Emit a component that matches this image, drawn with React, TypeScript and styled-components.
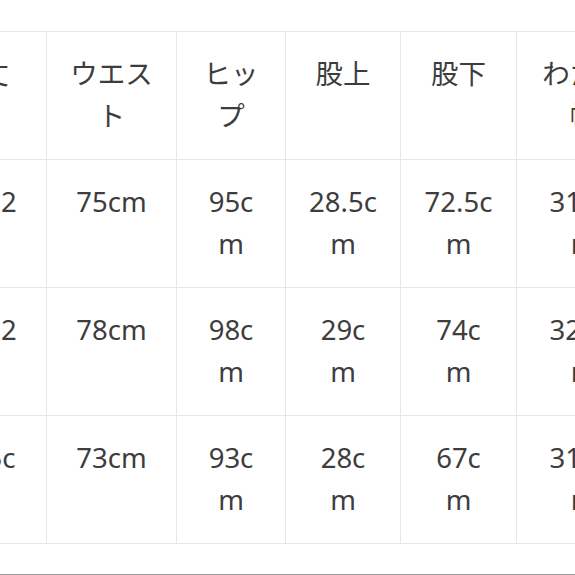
import React from 'react';
import styled, { createGlobalStyle } from 'styled-components';

interface Column {
  label: string;
  width: number;
  inner: number;
}

const columns: Column[] = [
  { label: '着丈', width: 130, inner: 76 },
  { label: 'ウエスト', width: 130, inner: 90 },
  { label: 'ヒップ', width: 109, inner: 62 },
  { label: '股上', width: 115, inner: 69 },
  { label: '股下', width: 116, inner: 69 },
  { label: 'わたり幅', width: 134, inner: 88 },
];

const tableWidth = columns.reduce((sum, col) => sum + col.width, 0);

const rows: string[][] = [
  ['100.2cm', '75cm', '95cm', '28.5cm', '72.5cm', '31.5cm'],
  ['101.2cm', '78cm', '98cm', '29cm', '74cm', '32.5cm'],
  ['97.5cm', '73cm', '93cm', '28cm', '67cm', '31.5cm'],
];

const GlobalStyle = createGlobalStyle`
  html, body {
    margin: 0;
    padding: 0;
    background: #fff;
  }
  body {
    font-family: "Noto Sans", "Noto Sans CJK JP", sans-serif;
    color: #3d3d3d;
  }
`;

const Section = styled.div`
  width: 575px;
  height: 575px;
  box-sizing: border-box;
  padding-top: 31px;
  overflow: hidden;
  border-bottom: 1px solid #9a9a9a;
`;

const SizeTable = styled.table<{ $width: number }>`
  width: ${({ $width }) => $width}px;
  margin-left: -84px;
  border-collapse: collapse;
  table-layout: fixed;
`;

const Cell = styled.td<{ $width: number; $inner: number }>`
  width: ${({ $width }) => $width}px;
  height: 128px;
  box-sizing: border-box;
  padding: 21px ${({ $width, $inner }) => ($width - $inner) / 2}px 0;
  border: 1px solid #e6e6e6;
  vertical-align: top;
  text-align: center;
  font-size: 27.5px;
  line-height: 42px;
  font-weight: 400;
  color: #3d3d3d;
  word-break: break-all;
`;

export default function App() {
  return (
    <>
      <GlobalStyle />
      <Section>
        <SizeTable $width={tableWidth}>
          <colgroup>
            {columns.map((col) => (
              <col key={col.label} style={{ width: col.width }} />
            ))}
          </colgroup>
          <thead>
            <tr>
              {columns.map((col) => (
                <Cell as="th" key={col.label} $width={col.width} $inner={col.inner}>
                  {col.label}
                </Cell>
              ))}
            </tr>
          </thead>
          <tbody>
            {rows.map((row, i) => (
              <tr key={i}>
                {row.map((value, j) => (
                  <Cell key={j} $width={columns[j].width} $inner={columns[j].inner}>
                    {value}
                  </Cell>
                ))}
              </tr>
            ))}
          </tbody>
        </SizeTable>
      </Section>
    </>
  );
}
